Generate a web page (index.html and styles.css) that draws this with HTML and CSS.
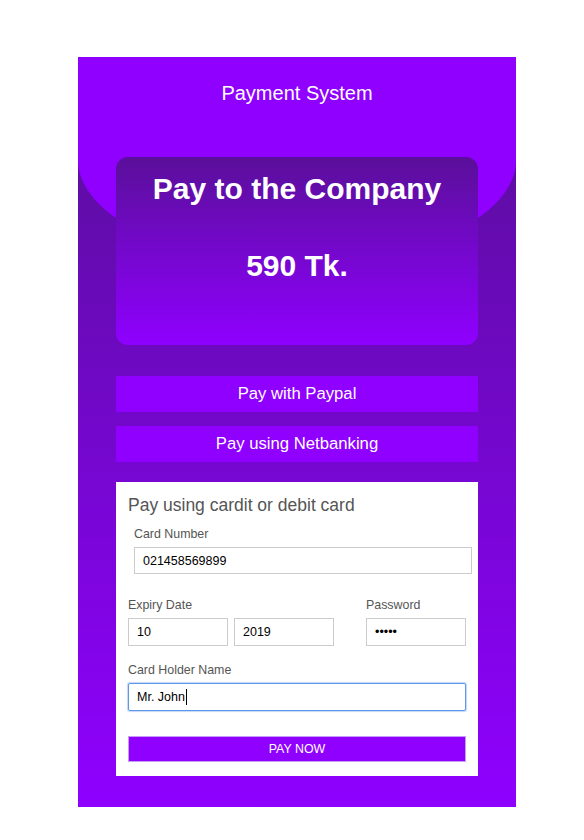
FILE: index.html
```html
<!DOCTYPE html>
<html lang="en">
<head>
<meta charset="utf-8">
<title>Payment System</title>
<link rel="stylesheet" href="styles.css">
</head>
<body>
<div class="panel">
  <header class="brand">Payment System</header>
  <section class="amount-card">
    <h1 class="payee">Pay to the Company</h1>
    <p class="amount">590 Tk.</p>
  </section>
  <div class="methods">
    <button class="method" type="button">Pay with Paypal</button>
    <button class="method" type="button">Pay using Netbanking</button>
  </div>
  <form class="card-form">
    <h2 class="form-title">Pay using cardit or debit card</h2>
    <div class="field field-shift">
      <label class="lbl">Card Number</label>
      <input class="inp inp-card" type="text" value="021458569899">
    </div>
    <div class="row">
      <div class="field">
        <label class="lbl">Expiry Date</label>
        <div class="pair">
          <input class="inp short" type="text" value="10">
          <input class="inp short" type="text" value="2019">
        </div>
      </div>
      <div class="field pw">
        <label class="lbl">Password</label>
        <input class="inp short" type="password" value="12345">
      </div>
    </div>
    <div class="field holder">
      <label class="lbl">Card Holder Name</label>
      <div class="caret-wrap">
        <input class="inp focused" type="text" value="Mr. John">
        <span class="caret"></span>
      </div>
    </div>
    <button class="pay" type="button">PAY NOW</button>
  </form>
</div>
</body>
</html>
```
FILE: styles.css
```css
html, body {
  margin: 0;
  padding: 0;
  background: #fff;
}
body {
  font-family: "Liberation Sans", Arial, sans-serif;
}
.panel {
  position: relative;
  width: 438px;
  height: 750px;
  margin: 57px 0 0 78px;
  padding: 0 38px;
  box-sizing: border-box;
  background: linear-gradient(to bottom, #570f97 0%, #8f00ff 100%);
  overflow: hidden;
}
.panel::before {
  content: "";
  position: absolute;
  top: 0;
  left: 0;
  width: 100%;
  height: 206px;
  background: #8f00ff;
  border-radius: 0 0 50% 50%;
}
.brand, .amount-card, .methods, .card-form {
  position: relative;
  z-index: 1;
}
.brand {
  height: 100px;
  box-sizing: border-box;
  padding-top: 25px;
  font-size: 20px;
  line-height: 23px;
  color: #fff;
  text-align: center;
}
.amount-card {
  height: 188px;
  box-sizing: border-box;
  padding-top: 15px;
  border-radius: 12px;
  background: linear-gradient(to bottom, #5a0f9a 0%, #8f00ff 100%);
  color: #fff;
  text-align: center;
}
.payee {
  margin: 0;
  font-size: 30px;
  line-height: 34px;
  font-weight: bold;
}
.amount {
  margin: 43px 0 0;
  font-size: 30px;
  line-height: 34px;
  font-weight: bold;
}
.methods {
  margin-top: 31px;
  display: flex;
  flex-direction: column;
  gap: 14px;
}
.method {
  display: block;
  width: 100%;
  height: 36px;
  border: none;
  padding: 0;
  background: #8f00ff;
  color: #fff;
  font-family: "Liberation Sans", Arial, sans-serif;
  font-size: 16.7px;
}
.card-form {
  margin-top: 20px;
  padding: 13px 12px 14px;
  background: #fff;
}
.form-title {
  margin: 0;
  font-size: 17.5px;
  line-height: 20px;
  font-weight: normal;
  color: #555;
}
.field {
  display: flex;
  flex-direction: column;
}
.field-shift {
  margin: 12px -6px 0 6px;
}
.lbl {
  font-size: 12.4px;
  line-height: 15px;
  color: #555;
  margin-bottom: 5px;
}
.inp {
  display: block;
  width: 100%;
  height: 28px;
  box-sizing: border-box;
  margin: 0;
  padding: 0 8px;
  border: 1px solid #ccc;
  border-radius: 0;
  background: #fff;
  color: #000;
  font-family: "Liberation Sans", Arial, sans-serif;
  font-size: 12.5px;
  outline: none;
}
.inp-card {
  height: 27px;
}
.row {
  margin-top: 24px;
  display: flex;
  justify-content: space-between;
}
.pair {
  display: flex;
  gap: 6px;
}
.short {
  width: 100px;
}
.pw {
  width: 100px;
}
.holder {
  margin-top: 17px;
}
.caret-wrap {
  position: relative;
}
.focused {
  border: 1px solid #5d98e6;
  border-radius: 2px;
  box-shadow: 0 0 1px 1px rgba(120, 165, 235, 0.45);
}
.caret {
  position: absolute;
  left: 58px;
  top: 6px;
  width: 1px;
  height: 16px;
  background: #000;
}
.pay {
  display: block;
  width: 100%;
  height: 26px;
  margin-top: 25px;
  padding: 0;
  border: 1px solid #c79cf6;
  background: #8f00ff;
  color: #fff;
  font-family: "Liberation Sans", Arial, sans-serif;
  font-size: 12.4px;
}
```
